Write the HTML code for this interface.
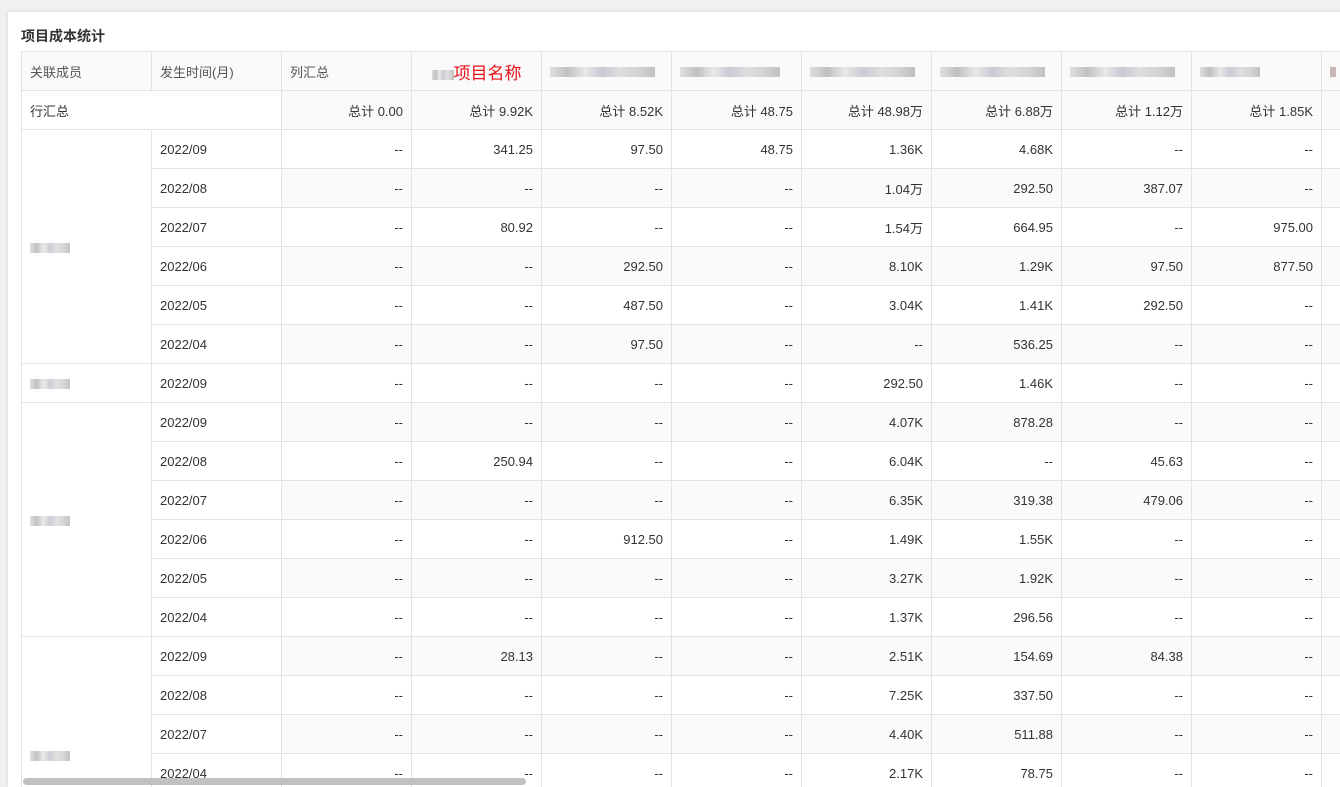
<!DOCTYPE html>
<html style="overflow:hidden;height:787px"><head><meta charset="utf-8"><style>
body{margin:0;width:1340px;height:787px;overflow:hidden;background:#f0f0f0;font-family:"Liberation Sans","Noto Sans CJK SC",sans-serif;position:relative;}
.card{position:absolute;left:8px;top:12px;width:1332px;height:775px;background:#fff;box-shadow:0 0 4px rgba(0,0,0,.12);}
.wrap{position:absolute;left:0;top:0;width:1340px;height:787px;overflow:hidden;}
.title{position:absolute;left:21px;top:26px;font-size:14px;font-weight:bold;color:#333;}
table{position:absolute;left:21px;top:51px;border-collapse:collapse;table-layout:fixed;width:1430px;font-size:13px;color:#333;}
td,th{border:1px solid #e3e3e3;height:38px;padding:0 8px;white-space:nowrap;overflow:hidden;}
th{background:#fafafa;color:#555;font-weight:normal;text-align:left;}
td.n{text-align:right;}
tr.l td.n{background:#f9fafc;}
td.m{vertical-align:middle;}
.b{display:inline-block;height:10px;vertical-align:middle;background:linear-gradient(90deg,#ccc,#999,#ddd,#aab,#ccc,#bbb,#999);opacity:.6}
.sb{position:absolute;left:23px;top:778px;width:503px;height:7px;border-radius:4px;background:#c1c1c1;}
</style></head><body><div class="wrap">
<div class="card"></div>
<div class="title">项目成本统计</div>
<table>
<colgroup><col style="width:130px"><col style="width:130px"><col style="width:130px"><col style="width:130px"><col style="width:130px"><col style="width:130px"><col style="width:130px"><col style="width:130px"><col style="width:130px"><col style="width:130px"><col style="width:130px"></colgroup>
<tr><th>关联成员</th><th>发生时间(月)</th><th>列汇总</th><th style="text-align:center"><span class="b" style="width:22px"></span><span style="color:#e8131a;font-size:17px">项目名称</span></th><th><span class="b" style="width:105px"></span></th><th><span class="b" style="width:100px"></span></th><th><span class="b" style="width:105px"></span></th><th><span class="b" style="width:105px"></span></th><th><span class="b" style="width:105px"></span></th><th><span class="b" style="width:60px"></span></th><th><span class="b" style="width:6px;background:#a88"></span></th></tr>
<tr class="l"><td colspan="2">行汇总</td><td class="n">总计 0.00</td><td class="n">总计 9.92K</td><td class="n">总计 8.52K</td><td class="n">总计 48.75</td><td class="n">总计 48.98万</td><td class="n">总计 6.88万</td><td class="n">总计 1.12万</td><td class="n">总计 1.85K</td><td class="n"></td></tr>
<tr><td rowspan="6" class="m"><span class="b" style="width:40px"></span></td><td>2022/09</td><td class="n">--</td><td class="n">341.25</td><td class="n">97.50</td><td class="n">48.75</td><td class="n">1.36K</td><td class="n">4.68K</td><td class="n">--</td><td class="n">--</td><td class="n"></td></tr>
<tr class="l"><td>2022/08</td><td class="n">--</td><td class="n">--</td><td class="n">--</td><td class="n">--</td><td class="n">1.04万</td><td class="n">292.50</td><td class="n">387.07</td><td class="n">--</td><td class="n"></td></tr>
<tr><td>2022/07</td><td class="n">--</td><td class="n">80.92</td><td class="n">--</td><td class="n">--</td><td class="n">1.54万</td><td class="n">664.95</td><td class="n">--</td><td class="n">975.00</td><td class="n"></td></tr>
<tr class="l"><td>2022/06</td><td class="n">--</td><td class="n">--</td><td class="n">292.50</td><td class="n">--</td><td class="n">8.10K</td><td class="n">1.29K</td><td class="n">97.50</td><td class="n">877.50</td><td class="n"></td></tr>
<tr><td>2022/05</td><td class="n">--</td><td class="n">--</td><td class="n">487.50</td><td class="n">--</td><td class="n">3.04K</td><td class="n">1.41K</td><td class="n">292.50</td><td class="n">--</td><td class="n"></td></tr>
<tr class="l"><td>2022/04</td><td class="n">--</td><td class="n">--</td><td class="n">97.50</td><td class="n">--</td><td class="n">--</td><td class="n">536.25</td><td class="n">--</td><td class="n">--</td><td class="n"></td></tr>
<tr><td class="m"><span class="b" style="width:40px"></span></td><td>2022/09</td><td class="n">--</td><td class="n">--</td><td class="n">--</td><td class="n">--</td><td class="n">292.50</td><td class="n">1.46K</td><td class="n">--</td><td class="n">--</td><td class="n"></td></tr>
<tr class="l"><td rowspan="6" class="m"><span class="b" style="width:40px"></span></td><td>2022/09</td><td class="n">--</td><td class="n">--</td><td class="n">--</td><td class="n">--</td><td class="n">4.07K</td><td class="n">878.28</td><td class="n">--</td><td class="n">--</td><td class="n"></td></tr>
<tr><td>2022/08</td><td class="n">--</td><td class="n">250.94</td><td class="n">--</td><td class="n">--</td><td class="n">6.04K</td><td class="n">--</td><td class="n">45.63</td><td class="n">--</td><td class="n"></td></tr>
<tr class="l"><td>2022/07</td><td class="n">--</td><td class="n">--</td><td class="n">--</td><td class="n">--</td><td class="n">6.35K</td><td class="n">319.38</td><td class="n">479.06</td><td class="n">--</td><td class="n"></td></tr>
<tr><td>2022/06</td><td class="n">--</td><td class="n">--</td><td class="n">912.50</td><td class="n">--</td><td class="n">1.49K</td><td class="n">1.55K</td><td class="n">--</td><td class="n">--</td><td class="n"></td></tr>
<tr class="l"><td>2022/05</td><td class="n">--</td><td class="n">--</td><td class="n">--</td><td class="n">--</td><td class="n">3.27K</td><td class="n">1.92K</td><td class="n">--</td><td class="n">--</td><td class="n"></td></tr>
<tr><td>2022/04</td><td class="n">--</td><td class="n">--</td><td class="n">--</td><td class="n">--</td><td class="n">1.37K</td><td class="n">296.56</td><td class="n">--</td><td class="n">--</td><td class="n"></td></tr>
<tr class="l"><td rowspan="4" class="m" style="padding-top:80px"><span class="b" style="width:40px"></span></td><td>2022/09</td><td class="n">--</td><td class="n">28.13</td><td class="n">--</td><td class="n">--</td><td class="n">2.51K</td><td class="n">154.69</td><td class="n">84.38</td><td class="n">--</td><td class="n"></td></tr>
<tr><td>2022/08</td><td class="n">--</td><td class="n">--</td><td class="n">--</td><td class="n">--</td><td class="n">7.25K</td><td class="n">337.50</td><td class="n">--</td><td class="n">--</td><td class="n"></td></tr>
<tr class="l"><td>2022/07</td><td class="n">--</td><td class="n">--</td><td class="n">--</td><td class="n">--</td><td class="n">4.40K</td><td class="n">511.88</td><td class="n">--</td><td class="n">--</td><td class="n"></td></tr>
<tr><td>2022/04</td><td class="n">--</td><td class="n">--</td><td class="n">--</td><td class="n">--</td><td class="n">2.17K</td><td class="n">78.75</td><td class="n">--</td><td class="n">--</td><td class="n"></td></tr>
</table>
<div class="sb"></div>
</div></body></html>
